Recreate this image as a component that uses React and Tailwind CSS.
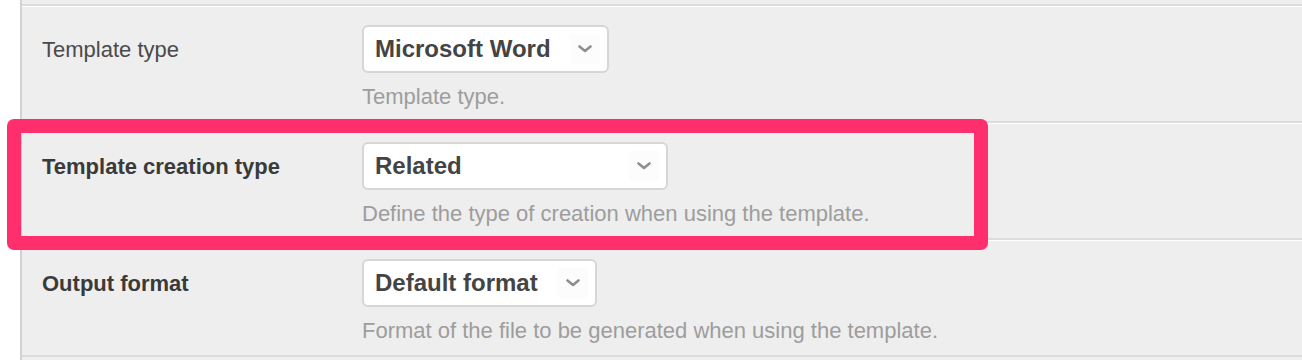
import React from "react";

function Chevron() {
  return (
    <svg width="14" height="8" viewBox="0 0 14 8" fill="none">
      <path d="M1.5 1.5 L7 6 L12.5 1.5" stroke="#8f8f8f" strokeWidth="2.6" strokeLinecap="round" strokeLinejoin="round" />
    </svg>
  );
}

function Select({ value, width }) {
  return (
    <div className={`${width} h-12 flex items-center justify-between bg-white border-2 border-[#d6d6d6] rounded-[6px] pl-[11px] pr-[7px]`}>
      <span className="text-[24px] font-bold text-[#444]">{value}</span>
      <span className="w-[30px] h-[30px] flex items-center justify-center bg-[#fcfcfc] rounded-sm">
        <Chevron />
      </span>
    </div>
  );
}

function Row({ label, bold, value, width, help }) {
  return (
    <div className="border-t-2 border-[#dcdcdc]">
      <div className="border-t border-white h-[115px] flex pl-5 pt-[18px]">
        <div className="w-[320px] h-12 flex items-center">
          <span className={`text-[22px] ${bold ? "font-bold text-[#3a3a3a]" : "text-[#4a4a4a]"}`}>{label}</span>
        </div>
        <div className="flex flex-col">
          <Select value={value} width={width} />
          <div className="mt-[11px] text-[22px] leading-[26px] text-[#9d9d9d]">{help}</div>
        </div>
      </div>
    </div>
  );
}

export default function App() {
  return (
    <div
      className="relative w-[1302px] h-[360px] overflow-hidden bg-white flex"
      style={{ fontFamily: '"Liberation Sans", Arial, sans-serif' }}
    >
      <div className="w-5 shrink-0" />
      <div className="flex-1 border-l-2 border-[#d2d2d2] bg-[#eeeeee]">
        <div className="h-1" />
        <Row label="Template type" value="Microsoft Word" width="w-[247px]" help="Template type." />
        <Row label="Template creation type" bold value="Related" width="w-[306px]" help="Define the type of creation when using the template." />
        <Row label="Output format" bold value="Default format" width="w-[235px]" help="Format of the file to be generated when using the template." />
        <div className="border-t-2 border-[#dcdcdc]" />
      </div>
      <div className="absolute left-[7px] top-[119px] w-[981px] h-[131px] border-[14px] border-[#ff2e6c] rounded-[7px] pointer-events-none" />
    </div>
  );
}
